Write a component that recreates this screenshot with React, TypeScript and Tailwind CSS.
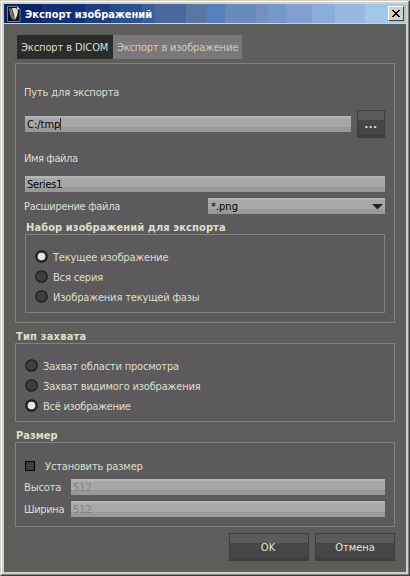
import React from 'react';

const field =
  'flex h-4 items-center bg-[linear-gradient(#b5b5b5_0_2px,#a7a7a7_2px_11px,#999999_11px)] pl-[2px] text-black';
const button =
  'flex h-7 items-center justify-center border border-[#3b3e3b] bg-[linear-gradient(#5c5a5d_0_9px,#464646_9px_24px,#3d3f3d_24px)] text-[#e4e4d8]';

function Label({ text, track, className = '' }: { text: string; track: string; className?: string }) {
  return <span className={`-mb-[2px] block whitespace-nowrap leading-[18px] ${track} ${className}`}>{text}</span>;
}

function Radio({ text, track, on = false }: { text: string; track: string; on?: boolean }) {
  return (
    <label className="flex h-5 items-center gap-[5px]">
      <svg className="mb-px" width="13" height="13" viewBox="0 0 13 13">
        <circle cx="6.5" cy="6.5" r="5.7" fill={on ? '#303230' : '#3c403c'} stroke="#1c1c1c" strokeWidth="1.2" />
        {on && <circle cx="6.5" cy="6.5" r="3.8" fill="#e6e6e4" />}
      </svg>
      <Label text={text} track={track} />
    </label>
  );
}

export default function App() {
  return (
    <div className="h-[576px] w-[410px] border-t border-l border-r border-b border-t-[#d4d0c8] border-l-[#d4d0c8] border-r-[#404040] border-b-[#404040] font-['DejaVu_Sans_Condensed','DejaVu_Sans',sans-serif] text-[11px] text-[#dedfce] [font-stretch:condensed]">
      <div className="h-full border border-t-white border-l-white border-r-[#808080] border-b-[#808080] bg-[#d4d0c8]">
        <div className="flex h-full flex-col border-2 border-[#d4d0c8] bg-[#5b5e5a]">
          <header className="flex h-[20px] shrink-0 items-center border-b border-[#d4d0c8] bg-[linear-gradient(90deg,#0a246a_0_38px,#10307a_38px_81px,#1d3e80_81px_107px,#284d8c_107px_116px,#2c5090_116px_138px,#3b5f9e_138px_151px,#49689f_151px_182px,#5c76a4_182px_203px,#587fb9_203px_221px,#678bbb_221px_252px,#7590c0_252px_264px,#7399c9_264px_282px,#809fd0_282px_308px,#8baddb_308px_331px,#98b8df_331px_361px,#a1c7eb_361px)] pr-[2px] pl-[3px]">
            <svg width="14" height="16" viewBox="0 0 14 16">
              <path d="M.5.5H10L13 3.5V15.5H.5Z" fill="#121212" stroke="#8e959c" strokeWidth=".8" />
              <path d="M10 .5V3.5H13Z" fill="#eee" />
              <path d="M2 2L5 3L6 8L8 14L5 13L3 9Z" fill="#777" />
              <path d="M5 2H9L11 5L10 10L8 14L7 9Z" fill="#ddd" />
            </svg>
            <Label text="Экспорт изображений" track="tracking-normal" className="ml-1 font-bold text-white" />
            <button className="ml-auto flex h-[15px] w-4 items-center justify-center border border-t-white border-l-white border-r-[#404040] border-b-[#404040] bg-[#d4d0c8]">
              <svg width="8" height="7" viewBox="0 0 8 7" shapeRendering="crispEdges">
                <path d="M0 0h2v1h1v1h2V1h1V0h2v1H7v1H6v1H5v1h1v1h1v1h1v1H6V6H5V5H3v1H2v1H0V6h1V5h1V4h1V3H2V2H1V1H0z" />
              </svg>
            </button>
          </header>

          <main className="flex flex-col px-[11px] pt-[11px]">
            <nav className="ml-[2px] flex h-6">
              <div className="flex w-24 items-center bg-[#2b2b2c] pl-1">
                <Label text="Экспорт в DICOM" track="tracking-[-0.1px]" />
              </div>
              <div className="flex w-[129px] items-center bg-[#7b777a] pl-1 text-[#cccdc1]">
                <Label text="Экспорт в изображение" track="tracking-[-0.2px]" />
              </div>
            </nav>

            <section className="mt-1 flex h-[260px] flex-col border border-[#80827f] bg-[#5c5a5d] px-[9px]">
              <Label text="Путь для экспорта" track="tracking-[-0.15px]" className="mt-5 -ml-px" />
              <div className="mt-[10px] flex items-center justify-between">
                <div className={`${field} w-[326px]`}>
                  <Label text="C:/tmp" track="tracking-normal" />
                  <i className="h-3 w-px bg-[#333]" />
                </div>
                <button className={`${button} w-7`}>
                  <Label text="..." track="tracking-[0.5px]" className="font-bold" />
                </button>
              </div>
              <Label text="Имя файла" track="tracking-[-0.4px]" className="mt-3 -ml-px" />
              <div className={`${field} mt-[10px]`}>
                <Label text="Series1" track="tracking-[-0.2px]" />
              </div>
              <div className="mt-[6px] flex items-center justify-between">
                <Label text="Расширение файла" track="tracking-[-0.3px]" className="-ml-px" />
                <div className={`${field} w-[177px] justify-between pr-[2px]`}>
                  <Label text="*.png" track="tracking-normal" className="ml-px" />
                  <svg width="11" height="7" viewBox="0 0 11 7">
                    <path d="M0 1H11L5.5 6.5Z" fill="#222" />
                  </svg>
                </div>
              </div>
              <Label text="Набор изображений для экспорта" track="tracking-[0.1px]" className="mt-[5px] ml-px font-bold" />
              <div className="-mt-px flex h-[79px] flex-col border border-[#80827f] pt-3 pl-[9px]">
                <Radio text="Текущее изображение" track="tracking-[-0.18px]" on />
                <Radio text="Вся серия" track="tracking-[-0.17px]" />
                <Radio text="Изображения текущей фазы" track="tracking-[-0.17px]" />
              </div>
            </section>

            <Label text="Тип захвата" track="tracking-[0.2px]" className="mt-[5px] ml-px font-bold" />
            <section className="-mt-px flex h-[79px] flex-col border border-[#80827f] bg-[#5c5a5d] pt-3 pl-[9px]">
              <Radio text="Захват области просмотра" track="tracking-[-0.18px]" />
              <Radio text="Захват видимого изображения" track="tracking-[-0.19px]" />
              <Radio text="Всё изображение" track="tracking-[-0.27px]" on />
            </section>

            <Label text="Размер" track="tracking-normal" className="mt-[5px] ml-px font-bold" />
            <section className="-mt-px flex h-[85px] flex-col border border-[#80827f] bg-[#5c5a5d] px-[9px] pt-[15px]">
              <label className="flex h-4 items-center gap-[10px]">
                <span className="size-[10px] border border-black bg-[#3c403c]" />
                <Label text="Установить размер" track="tracking-[-0.15px]" />
              </label>
              <div className="mt-[5px] flex items-center">
                <Label text="Высота" track="tracking-[-0.1px]" className="-ml-px w-[47px]" />
                <div className={`${field} grow`}>
                  <Label text="512" track="tracking-normal" className="text-[#858285]" />
                </div>
              </div>
              <div className="mt-[6px] flex items-center">
                <Label text="Ширина" track="tracking-[-0.35px]" className="-ml-px w-[47px]" />
                <div className={`${field} grow`}>
                  <Label text="512" track="tracking-normal" className="text-[#858285]" />
                </div>
              </div>
            </section>

            <footer className="mt-[6px] flex justify-end gap-[6px]">
              <button className={`${button} w-20`}>
                <Label text="OK" track="tracking-normal" className="mr-[2px]" />
              </button>
              <button className={`${button} w-20`}>
                <Label text="Отмена" track="tracking-normal" />
              </button>
            </footer>
          </main>
        </div>
      </div>
    </div>
  );
}
